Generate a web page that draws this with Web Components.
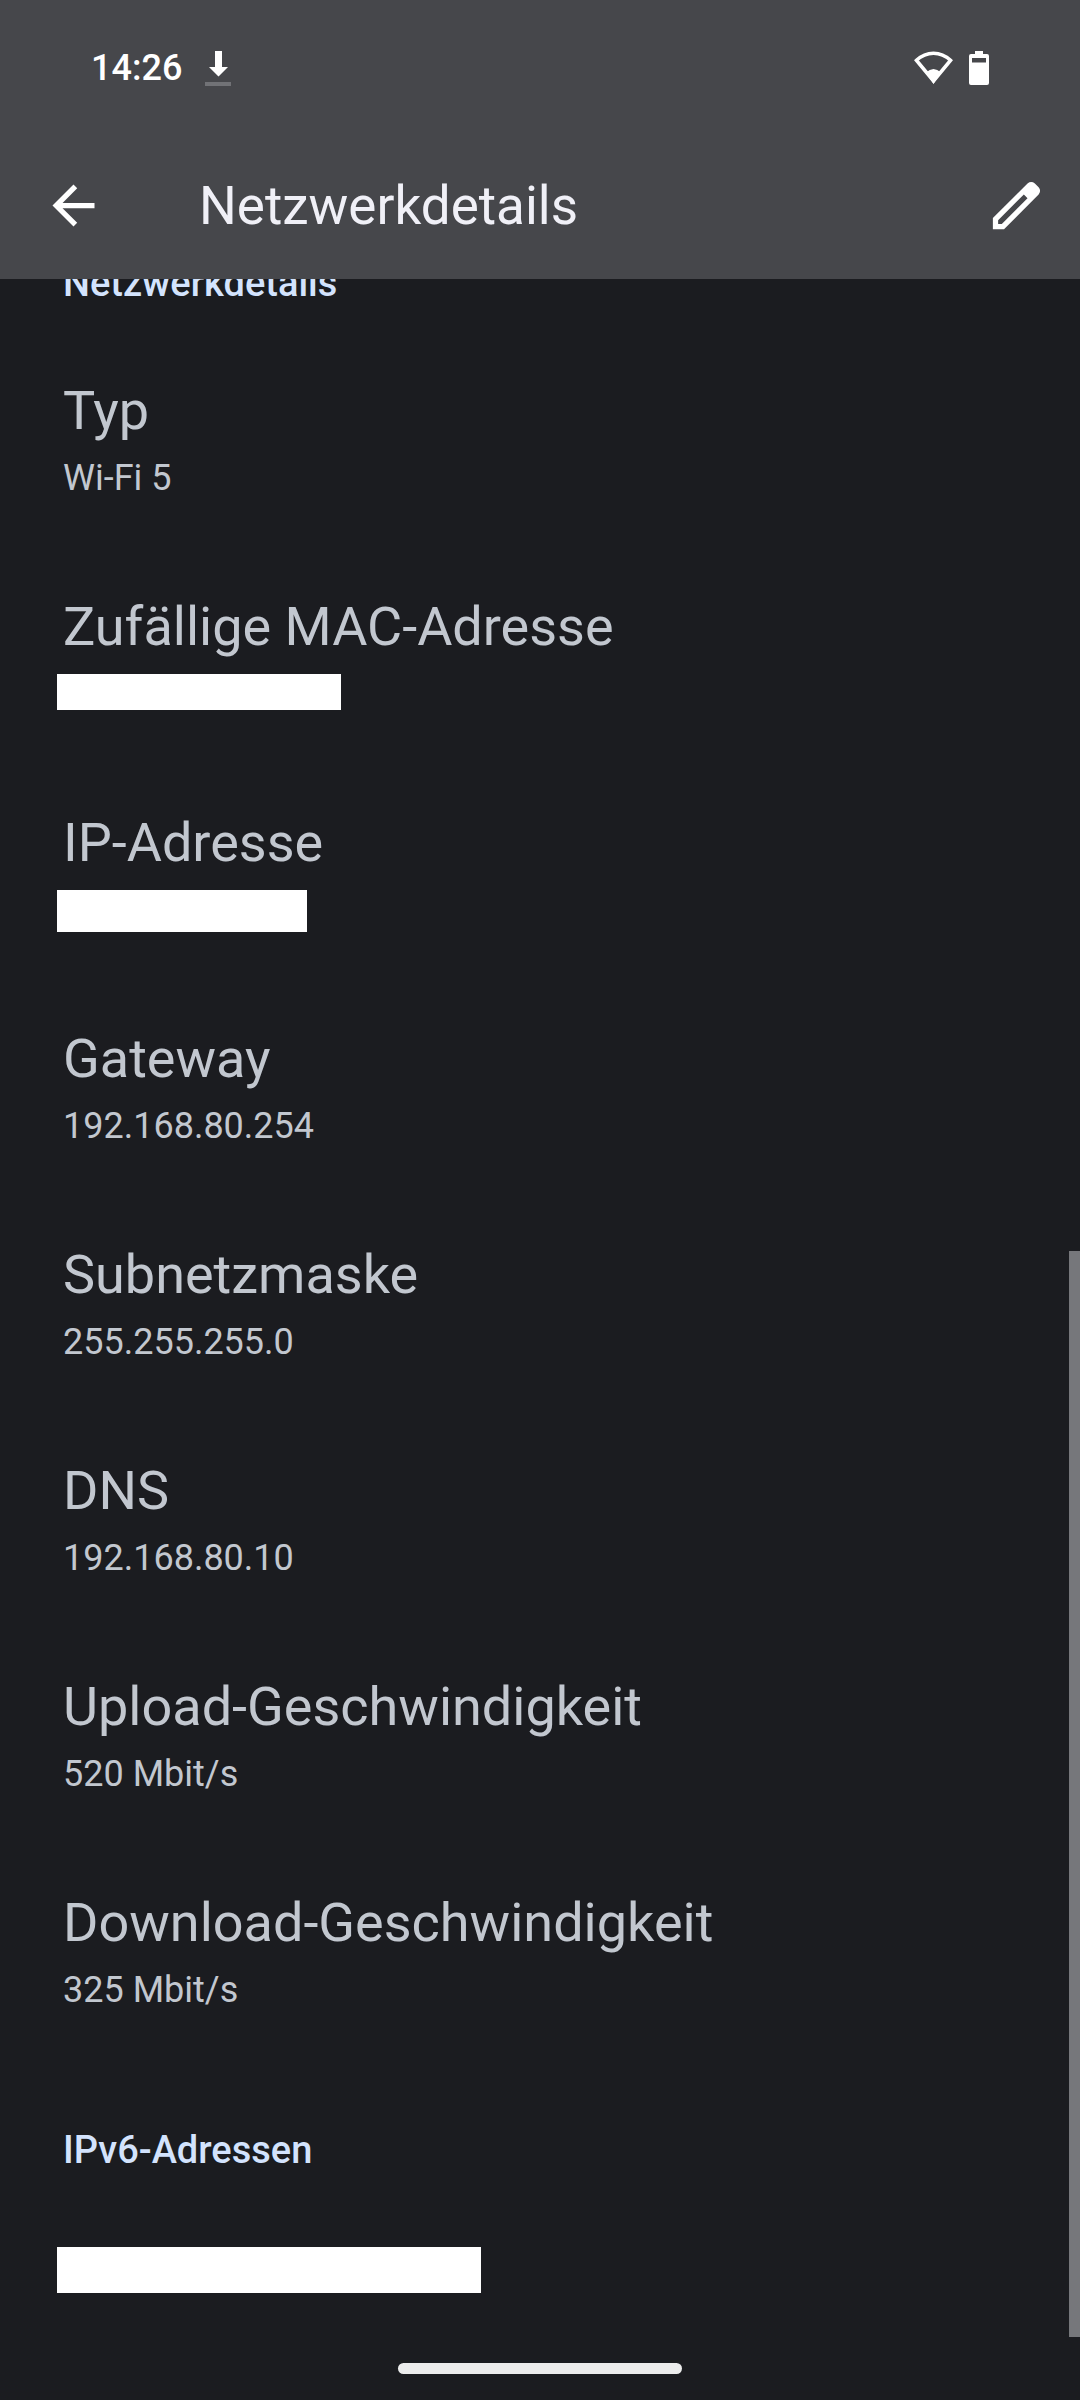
<!DOCTYPE html>
<html lang="de">
<head>
<meta charset="utf-8">
<meta name="viewport" content="width=device-width, initial-scale=1">
<title>Netzwerkdetails</title>
<style>
  html { background: #1b1c20; }
  body { margin: 0; font-family: Roboto, "Liberation Sans", sans-serif; color: #c2c7cf; }
</style>
</head>
<body>
<network-screen>
  <status-bar slot="top" time="14:26"></status-bar>
  <app-bar slot="top">Netzwerkdetails</app-bar>

  <pref-category>Netzwerkdetails</pref-category>
  <pref-row label="Typ">Wi-Fi 5</pref-row>
  <pref-row label="Zufällige MAC-Adresse"><hidden-value style="--w:284px;--h:36px"></hidden-value></pref-row>
  <pref-row label="IP-Adresse"><hidden-value style="--w:250px;--h:42px"></hidden-value></pref-row>
  <pref-row label="Gateway">192.168.80.254</pref-row>
  <pref-row label="Subnetzmaske">255.255.255.0</pref-row>
  <pref-row label="DNS">192.168.80.10</pref-row>
  <pref-row label="Upload-Geschwindigkeit">520 Mbit/s</pref-row>
  <pref-row label="Download-Geschwindigkeit">325 Mbit/s</pref-row>
  <pref-category>IPv6-Adressen</pref-category>
  <pref-row><hidden-value style="--w:424px;--h:46px"></hidden-value></pref-row>

  <gesture-handle slot="bottom"></gesture-handle>
</network-screen>

<script>
const define = (name, html, setup) => customElements.define(name, class extends HTMLElement {
  constructor() {
    super();
    this.attachShadow({ mode: 'open' }).innerHTML = html;
  }
  connectedCallback() { if (setup) setup(this, this.shadowRoot); }
});

define('hidden-value', `
  <style>
    :host { display: block; width: var(--w); height: var(--h); max-width: 100%;
            margin: 11px 0 0 -6px; background: #fff; }
  </style>`);

define('pref-row', `
  <style>
    :host { display: block; padding: 41px 63px; }
    dl, dt, dd { margin: 0; }
    dt { font-size: 54px; line-height: 72px; }
    dd { font-size: 36px; line-height: 62px; min-height: 62px; display: flow-root; }
    :host(:not([label])) { padding-top: 35px; }
    :host(:not([label])) dt { display: none; }
  </style>
  <dl><dt></dt><dd><slot></slot></dd></dl>`,
  (el, root) => { root.querySelector('dt').textContent = el.getAttribute('label') || ''; });

define('pref-category', `
  <style>
    :host { display: block; padding: 64px 63px 27px; color: #d3e3fd; }
    h2 { margin: 0; font-size: 38px; line-height: 48px; font-weight: 500; }
  </style>
  <h2><slot></slot></h2>`);

define('status-bar', `
  <style>
    :host { display: flex; align-items: center; justify-content: space-between;
            height: 136px; padding: 0 91px 0 91px; box-sizing: border-box; color: #fff; }
    div { display: flex; align-items: center; }
    .left { gap: 22px; }
    .right { gap: 16px; }
    time { font-size: 36px; line-height: 48px; font-weight: 500; }
    svg { display: block; }
  </style>
  <div class="left">
    <time></time>
    <svg width="28" height="36" viewBox="0 0 28 36" role="img" aria-label="Download">
      <path fill="#fff" d="M11 1h7v16h6L14.500 26.500 5 17h6z"/>
      <rect x="1" y="32" width="26" height="4" fill="#717276"/>
    </svg>
  </div>
  <div class="right">
    <svg width="39" height="34" viewBox="0 0 39 34" role="img" aria-label="WLAN">
      <path fill="none" stroke="#fff" stroke-width="3.600" d="M2.500 9.300C12.500-.2 26.500-.2 36.500 9.300L19.500 30z"/>
      <path fill="#fff" d="M12 21.500q7.500-7 15 0L19.500 33z"/>
    </svg>
    <svg width="20" height="34" viewBox="0 0 20 34" role="img" aria-label="Akku">
      <path fill="#fff" fill-rule="evenodd" d="M6 0h8v3h4a2 2 0 0 1 2 2v27a2 2 0 0 1-2 2H2a2 2 0 0 1-2-2V5a2 2 0 0 1 2-2h4zM3 7v4.500h14V7z"/>
    </svg>
  </div>`,
  (el, root) => { root.querySelector('time').textContent = el.getAttribute('time'); });

define('app-bar', `
  <style>
    :host { display: flex; align-items: center; height: 143px; padding: 0 32px 4px 42px;
            box-sizing: border-box; color: #f0f0f7; }
    h1 { flex: 1; margin: 0 0 0 94px; font-size: 53px; line-height: 72px; font-weight: 400; }
    button { display: block; padding: 0; border: 0; background: none; color: #fff; }
    svg { display: block; width: 63px; height: 63px; fill: currentColor; }
  </style>
  <button type="button" aria-label="Zurück">
    <svg viewBox="0 0 24 24"><path d="M20 11H7.830l5.590-5.590L12 4l-8 8 8 8 1.410-1.410L7.830 13H20v-2z"/></svg>
  </button>
  <h1><slot></slot></h1>
  <button type="button" aria-label="Bearbeiten">
    <svg viewBox="0 0 24 24"><path fill-rule="evenodd" d="M3 21V16.750L16.200 3.580Q17.600 2.450 19 3.580L20.430 5Q21.550 6.400 20.430 7.830L7.250 21zM5 19H6.400L16.200 9.200 14.800 7.800 5 17.600z"/></svg>
  </button>`);

define('gesture-handle', `
  <style>
    :host { display: flex; justify-content: center; padding: 26px 0; }
    i { width: 284px; height: 11px; border-radius: 6px; background: #ececec; }
  </style>
  <i></i>`);

define('network-screen', `
  <style>
    :host { display: flex; flex-direction: column; min-height: 100vh; position: relative; }
    header { position: sticky; top: 0; z-index: 1; background: #46474b; }
    /* The list is scrolled so that its first heading is partly under the header. */
    main { margin-top: -84px; }
    footer { margin-top: auto; }
    main > ::slotted(:last-child) { padding-bottom: 0; }
    .thumb { position: absolute; right: 0; top: 1251px; bottom: 63px; width: 11px; background: #76777b; }
  </style>
  <header><slot name="top"></slot></header>
  <main><slot></slot></main>
  <footer><slot name="bottom"></slot></footer>
  <div class="thumb"></div>`);

document.querySelector('pref-row:not([label])').style.paddingBottom = '24px';
</script>
</body>
</html>
